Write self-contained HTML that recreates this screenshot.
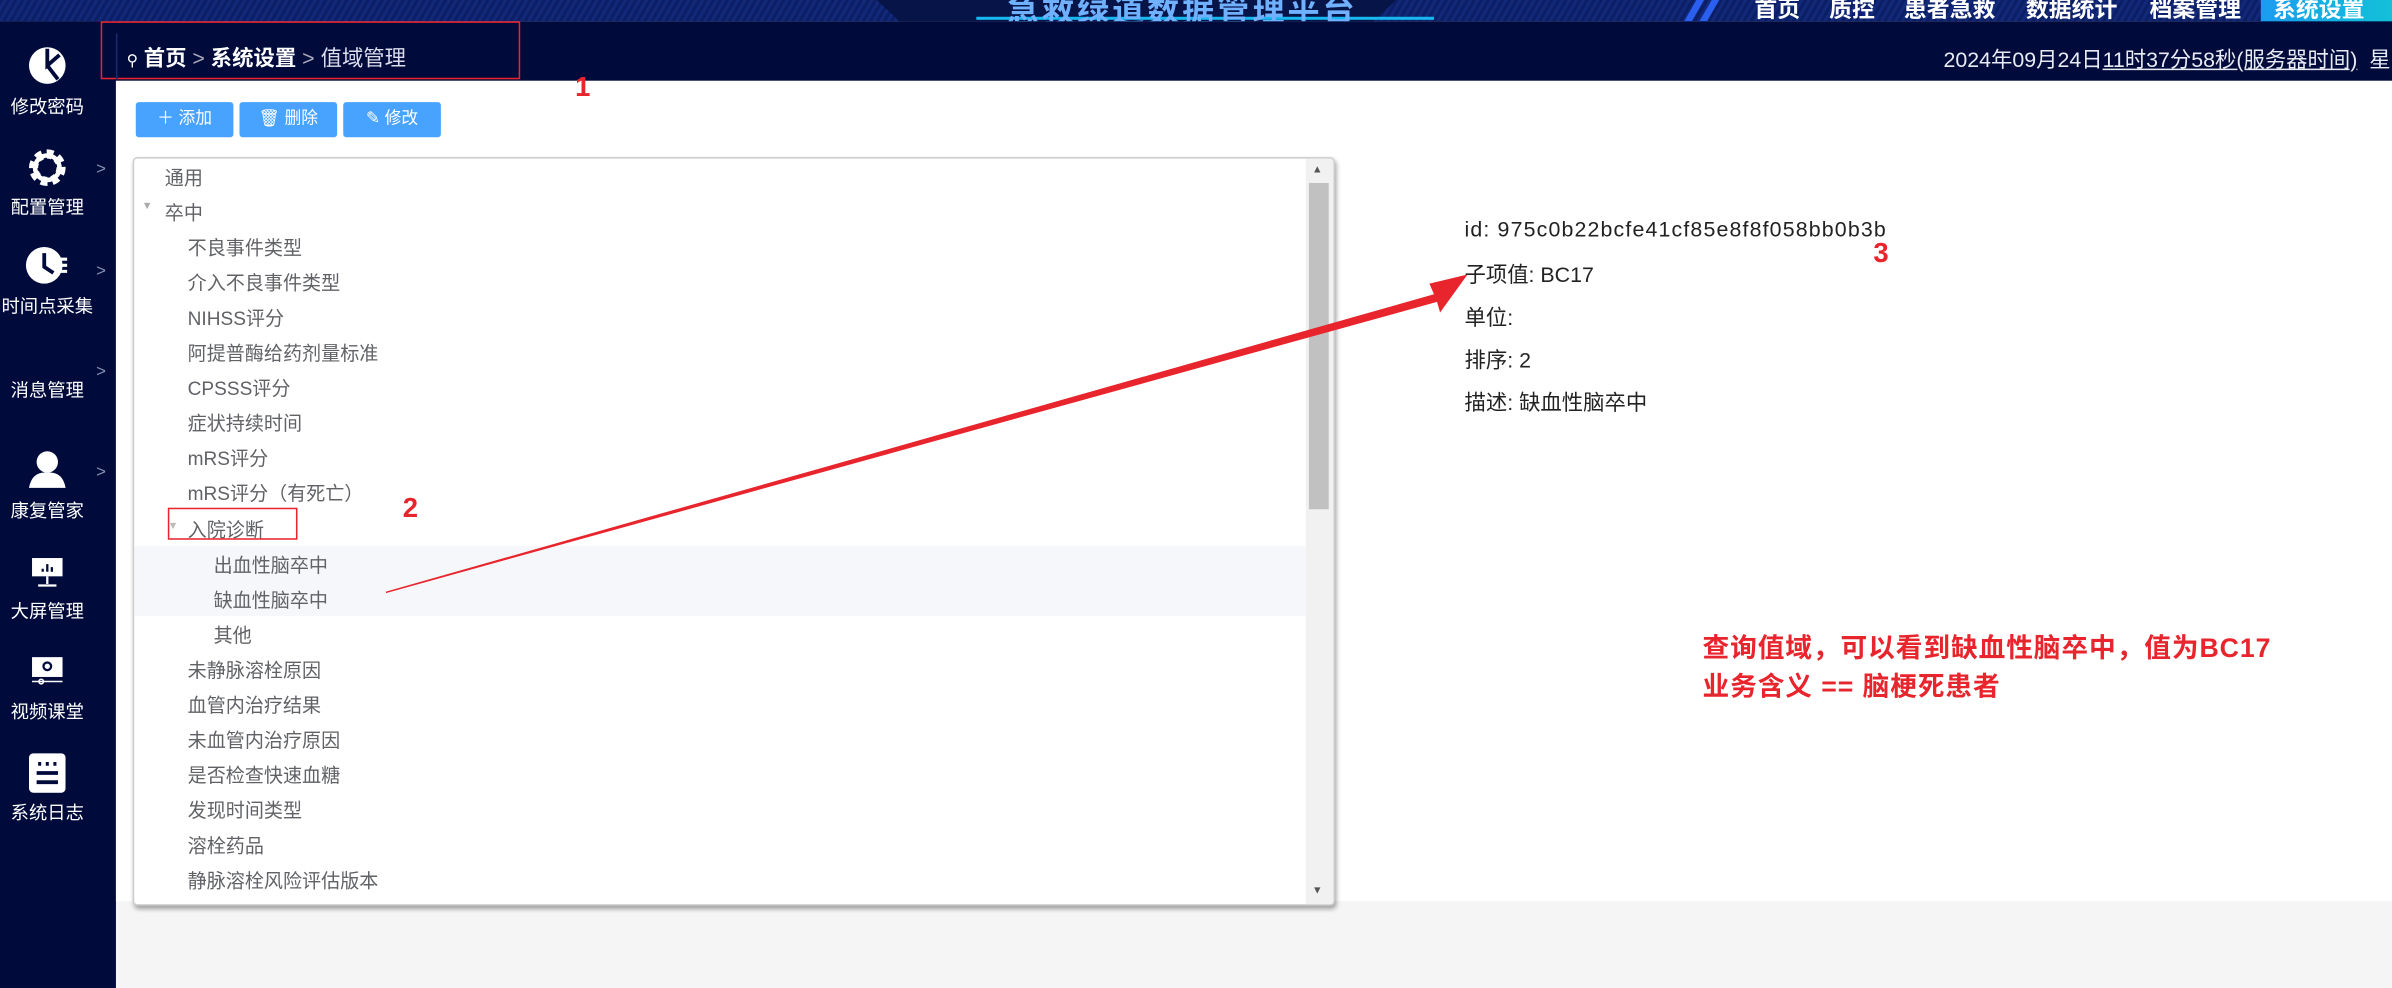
<!DOCTYPE html>
<html><head><meta charset="utf-8"><style>
*{margin:0;padding:0;box-sizing:border-box}
html,body{width:2392px;height:988px;overflow:hidden;background:#fff}
#w{position:absolute;left:0;top:0;width:1568px;height:648px;transform:scale(1.52551,1.52469);transform-origin:0 0;font-family:"Liberation Sans","Noto Sans CJK SC",sans-serif;background:#f5f5f5}
.a{position:absolute;white-space:nowrap}
.top{left:0;top:0;width:1568px;height:14px;background:repeating-linear-gradient(120deg,#0c1f66 0 2px,#12297a 2px 4px)}
.bar{left:0;top:14px;width:1568px;height:39px;background:#000b3b}
.side{left:0;top:14px;width:76px;height:634px;background:#000b3b}
.nav{top:-5px;color:#fff;font-weight:bold;font-size:15px}
.si{color:#fff;font-size:12px;width:62px;text-align:center;left:0}
.ar{color:#8890b0;font-size:11px;left:63px}
.btn{top:67px;height:23px;background:#48a2ff;color:#fff;font-size:11px;border-radius:2px;text-align:center;line-height:23px;width:64px}
.t{font-size:12.5px;color:#606266;left:0}
.d{left:960px;font-size:14px;color:#222}
.r{color:#e8242c;font-weight:bold}
</style></head><body><div id="w">
<div class="a top"></div>
<div class="a" style="left:560px;top:0;width:370px;height:14px;background:#071448;clip-path:polygon(4% 0,96% 0,92% 100%,8% 100%)"></div>
<div class="a" style="left:640px;top:11px;width:300px;height:2px;background:#19b7f0"></div>
<div class="a" style="left:660px;top:-9px;font-size:21px;font-weight:bold;color:#6fb0ff;letter-spacing:2px">急救绿道数据管理平台</div>
<div class="a" style="left:1108px;top:0;width:5px;height:14px;background:#2a5ff0;transform:skewX(-30deg)"></div>
<div class="a" style="left:1118px;top:0;width:5px;height:14px;background:#2a5ff0;transform:skewX(-30deg)"></div>
<div class="a nav" style="left:1150px">首页</div>
<div class="a nav" style="left:1199px">质控</div>
<div class="a nav" style="left:1248px">患者急救</div>
<div class="a nav" style="left:1328px">数据统计</div>
<div class="a nav" style="left:1409px">档案管理</div>
<div class="a" style="left:1482px;top:0;width:86px;height:15px;background:linear-gradient(90deg,#1a9cf0,#14c0d8)"></div>
<div class="a nav" style="left:1490px">系统设置</div>
<div class="a bar"></div>
<div class="a side"></div>
<div class="a" style="left:66px;top:14px;width:275px;height:38px;border:1.5px solid #e8242c"></div>
<div class="a" style="left:76px;top:22px;width:1px;height:30px;background:#1a2a6a"></div>
<div class="a" style="left:83px;top:28px;font-size:14px;color:#fff"><span style="font-size:10px">⚲</span> <b>首页</b> <span style="color:#aab">&gt;</span> <b>系统设置</b> <span style="color:#aab">&gt;</span> <span style="color:#dde">值域管理</span></div>
<div class="a" style="left:1274px;top:29px;font-size:14px;color:#e8eaf4">2024年09月24日<u>11时37分58秒(服务器时间)</u>&nbsp; 星</div>
<!-- sidebar -->
<svg class="a" style="left:18px;top:30px" width="26" height="26" viewBox="0 0 26 26"><circle cx="13" cy="13" r="12" fill="#fff"/><path d="M13 2V13L21 6M13 13L20 22" stroke="#000b3b" stroke-width="2.5" fill="none"/></svg>
<div class="a si" style="top:61px">修改密码</div>
<svg class="a" style="left:18px;top:97px" width="26" height="26" viewBox="0 0 26 26"><circle cx="13" cy="13" r="9" fill="none" stroke="#fff" stroke-width="6" stroke-dasharray="4 3"/><circle cx="13" cy="13" r="8" fill="none" stroke="#fff" stroke-width="3"/></svg>
<div class="a si" style="top:127px">配置管理</div><div class="a ar" style="top:105px">&gt;</div>
<svg class="a" style="left:17px;top:161px" width="28" height="26" viewBox="0 0 28 26"><circle cx="12" cy="13" r="12" fill="#fff"/><path d="M12 5V14L18 18" stroke="#000b3b" stroke-width="2.5" fill="none"/><path d="M22 9h5M23 13h4M22 17h5" stroke="#fff" stroke-width="2"/></svg>
<div class="a si" style="top:192px">时间点采集</div><div class="a ar" style="top:172px">&gt;</div>
<div class="a si" style="top:247px">消息管理</div><div class="a ar" style="top:238px">&gt;</div>
<svg class="a" style="left:18px;top:295px" width="26" height="26" viewBox="0 0 26 26"><circle cx="13" cy="8" r="7" fill="#fff"/><path d="M1 25Q3 14 13 15Q23 14 25 25Z" fill="#fff"/></svg>
<div class="a si" style="top:326px">康复管家</div><div class="a ar" style="top:304px">&gt;</div>
<svg class="a" style="left:20px;top:365px" width="22" height="20" viewBox="0 0 22 20"><rect x="1" y="1" width="20" height="12" fill="#fff"/><path d="M8 10V8M11 10V5M14 10V7" stroke="#000b3b" stroke-width="1.5"/><path d="M11 13V18M5 19H17" stroke="#fff" stroke-width="1.5"/></svg>
<div class="a si" style="top:392px">大屏管理</div>
<svg class="a" style="left:20px;top:430px" width="22" height="20" viewBox="0 0 22 20"><rect x="1" y="1" width="20" height="13" fill="#fff"/><circle cx="11" cy="7" r="2.5" fill="none" stroke="#000b3b" stroke-width="1.5"/><path d="M1 17H21" stroke="#fff" stroke-width="1"/><circle cx="7" cy="17" r="1.5" fill="none" stroke="#fff"/></svg>
<div class="a si" style="top:458px">视频课堂</div>
<svg class="a" style="left:19px;top:494px" width="24" height="26" viewBox="0 0 24 26"><rect x="0" y="0" width="24" height="26" rx="3" fill="#fff"/><path d="M6 7h2M11 7h2M16 7h2M5 13h14M5 19h14" stroke="#000b3b" stroke-width="2.5"/></svg>
<div class="a si" style="top:524px">系统日志</div>
<!-- content -->
<div class="a" style="left:76px;top:53px;width:1492px;height:538px;background:#fff"></div>
<div class="a btn" style="left:89px">＋ 添加</div>
<div class="a btn" style="left:157px">🗑 删除</div>
<div class="a btn" style="left:225px">✎ 修改</div>
<div class="a" style="left:87px;top:103px;width:788px;height:491px;border:1px solid #cfcfcf;border-radius:3px;box-shadow:1px 2px 3px rgba(0,0,0,.35);background:#fff;overflow:hidden">
<div class="a" style="left:768px;top:0;width:18px;height:490px;background:#f1f1f1"></div>
<div class="a" style="left:770px;top:16px;width:13px;height:214px;background:#c1c1c1"></div>
<div class="a" style="left:772px;top:4px;font-size:7px;color:#555">▲</div>
<div class="a" style="left:772px;top:477px;font-size:7px;color:#555">▼</div>
<div class="a" style="left:0;top:254px;width:768px;height:46px;background:#f5f7fa"></div>
</div>
<div id="tree" class="a" style="left:87px;top:106px;width:760px">
<div class="a t" style="left:21px;top:0">通用</div>
<div class="a" style="left:6px;top:26px;font-size:7px;color:#aaa">▼</div><div class="a t" style="left:21px;top:23px">卒中</div>
<div class="a t" style="left:36px;top:46px">不良事件类型</div>
<div class="a t" style="left:36px;top:69px">介入不良事件类型</div>
<div class="a t" style="left:36px;top:92px">NIHSS评分</div>
<div class="a t" style="left:36px;top:115px">阿提普酶给药剂量标准</div>
<div class="a t" style="left:36px;top:138px">CPSSS评分</div>
<div class="a t" style="left:36px;top:161px">症状持续时间</div>
<div class="a t" style="left:36px;top:184px">mRS评分</div>
<div class="a t" style="left:36px;top:207px">mRS评分（有死亡）</div>
<div class="a" style="left:23px;top:236px;font-size:7px;color:#bbb">▼</div><div class="a t" style="left:36px;top:231px">入院诊断</div>
<div class="a t" style="left:53px;top:254px">出血性脑卒中</div>
<div class="a t" style="left:53px;top:277px">缺血性脑卒中</div>
<div class="a t" style="left:53px;top:300px">其他</div>
<div class="a t" style="left:36px;top:323px">未静脉溶栓原因</div>
<div class="a t" style="left:36px;top:346px">血管内治疗结果</div>
<div class="a t" style="left:36px;top:369px">未血管内治疗原因</div>
<div class="a t" style="left:36px;top:392px">是否检查快速血糖</div>
<div class="a t" style="left:36px;top:415px">发现时间类型</div>
<div class="a t" style="left:36px;top:438px">溶栓药品</div>
<div class="a t" style="left:36px;top:461px">静脉溶栓风险评估版本</div>
</div>
<div class="a" style="left:110px;top:333px;width:85px;height:21px;border:1px solid #e8242c"></div>
<div class="a d" style="top:142px;letter-spacing:0.75px">id: 975c0b22bcfe41cf85e8f8f058bb0b3b</div>
<div class="a d" style="top:170px">子项值: BC17</div>
<div class="a d" style="top:198px">单位:</div>
<div class="a d" style="top:226px">排序: 2</div>
<div class="a d" style="top:254px">描述: 缺血性脑卒中</div>
<div class="a r" style="left:377px;top:47px;font-size:18px">1</div>
<div class="a r" style="left:264px;top:323px;font-size:18px">2</div>
<div class="a r" style="left:1228px;top:156px;font-size:18px">3</div>
<div class="a r" style="left:1116px;top:413px;font-size:17.5px;line-height:25px;letter-spacing:0.6px">查询值域，可以看到缺血性脑卒中，值为BC17<br>业务含义 == 脑梗死患者</div>
<svg class="a" style="left:0;top:0" width="1568" height="648"><polygon points="253,388 940,193 937,186 962,180 944,205 942,198 253,389" fill="#e8242c"/></svg>
</div></body></html>
